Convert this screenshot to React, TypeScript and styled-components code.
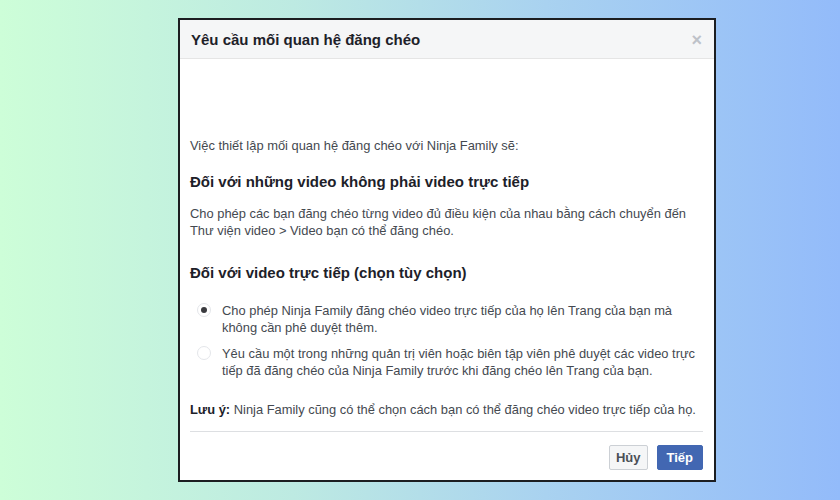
import React from "react";
import styled, { createGlobalStyle } from "styled-components";

const Global = createGlobalStyle`
  html, body { margin: 0; padding: 0; }
  body { font-family: "Liberation Sans", Arial, sans-serif; }
`;

const Page = styled.div`
  width: 840px;
  height: 500px;
  box-sizing: border-box;
  background: linear-gradient(90deg, #cdfed8 0%, #bdeae2 35%, #a9d2f0 65%, #93bbfa 100%);
  padding: 18px 0 0 178px;
`;

const Dialog = styled.div`
  width: 538px;
  height: 464px;
  box-sizing: border-box;
  border: 2px solid #1c1e21;
  background: #fff;
  display: flex;
  flex-direction: column;
`;

const Header = styled.div`
  height: 39px;
  box-sizing: border-box;
  background: #f5f6f7;
  border-bottom: 1px solid #e5e5e5;
  display: flex;
  align-items: center;
  justify-content: space-between;
  padding: 0 12px 0 11px;
`;

const Title = styled.div`
  font-size: 15px;
  font-weight: bold;
  color: #1d2129;
`;

const Close = styled.span`
  font-size: 18px;
  font-weight: bold;
  color: #bec2c9;
  line-height: 1;
  margin-top: 2px;
`;

const Body = styled.div`
  flex: 1;
  padding: 78px 11px 0 10px;
  display: flex;
  flex-direction: column;
`;

const Text = styled.p<{ $mt?: number }>`
  margin: ${(p) => p.$mt ?? 0}px 0 0;
  font-size: 12.9px;
  line-height: 17px;
  color: #444950;
`;

const Heading = styled.h3<{ $mt: number }>`
  margin: ${(p) => p.$mt}px 0 0;
  font-size: 15px;
  line-height: 20px;
  font-weight: bold;
  color: #1d2129;
`;

const Options = styled.div`
  margin-top: 19px;
  display: flex;
  flex-direction: column;
  gap: 9px;
  padding-left: 7px;
`;

const Option = styled.label`
  display: flex;
  align-items: flex-start;
  gap: 11px;
  font-size: 12.9px;
  line-height: 17px;
  color: #444950;
`;

const Radio = styled.span<{ $checked?: boolean }>`
  flex: none;
  width: 14px;
  height: 14px;
  box-sizing: border-box;
  margin-top: 1px;
  border-radius: 50%;
  border: 1px solid #e4e6ea;
  background: #fff;
  display: flex;
  align-items: center;
  justify-content: center;
  &::after {
    content: "";
    width: 6px;
    height: 6px;
    border-radius: 50%;
    background: ${(p) => (p.$checked ? "#3a3b3f" : "transparent")};
  }
`;

const Note = styled(Text)`
  margin-top: 22px;
  b { font-weight: bold; color: #1d2129; }
`;

const Footer = styled.div`
  margin-top: 13px;
  border-top: 1px solid #dddfe2;
  padding-top: 13px;
  display: flex;
  justify-content: flex-end;
  gap: 9px;
`;

const Button = styled.button<{ $primary?: boolean }>`
  height: 25px;
  padding: 0 ${(p) => (p.$primary ? 9 : 6)}px;
  font-family: "Liberation Sans", Arial, sans-serif;
  font-size: 13px;
  font-weight: bold;
  border-radius: 2px;
  border: 1px solid ${(p) => (p.$primary ? "#4267b2" : "#ccd0d5")};
  background: ${(p) => (p.$primary ? "#4267b2" : "#f5f6f7")};
  color: ${(p) => (p.$primary ? "#fff" : "#4b4f56")};
`;

export default function App() {
  return (
    <>
      <Global />
      <Page>
        <Dialog>
          <Header>
            <Title>Yêu cầu mối quan hệ đăng chéo</Title>
            <Close>×</Close>
          </Header>
          <Body>
            <Text>Việc thiết lập mối quan hệ đăng chéo với Ninja Family sẽ:</Text>
            <Heading $mt={18}>Đối với những video không phải video trực tiếp</Heading>
            <Text $mt={13}>
              Cho phép các bạn đăng chéo từng video đủ điều kiện của nhau bằng cách chuyển đến
              Thư viện video &gt; Video bạn có thể đăng chéo.
            </Text>
            <Heading $mt={24}>Đối với video trực tiếp (chọn tùy chọn)</Heading>
            <Options>
              <Option>
                <Radio $checked />
                <span>
                  Cho phép Ninja Family đăng chéo video trực tiếp của họ lên Trang của bạn mà
                  không cần phê duyệt thêm.
                </span>
              </Option>
              <Option>
                <Radio />
                <span>
                  Yêu cầu một trong những quản trị viên hoặc biên tập viên phê duyệt các video trực
                  tiếp đã đăng chéo của Ninja Family trước khi đăng chéo lên Trang của bạn.
                </span>
              </Option>
            </Options>
            <Note>
              <b>Lưu ý:</b> Ninja Family cũng có thể chọn cách bạn có thể đăng chéo video trực tiếp của họ.
            </Note>
            <Footer>
              <Button>Hủy</Button>
              <Button $primary>Tiếp</Button>
            </Footer>
          </Body>
        </Dialog>
      </Page>
    </>
  );
}
